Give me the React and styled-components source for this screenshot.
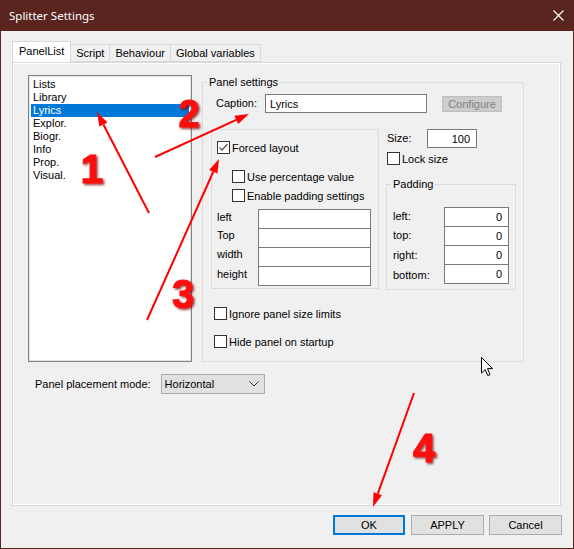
import React from "react";
import styled, { createGlobalStyle } from "styled-components";

const Global = createGlobalStyle`
  html, body { margin: 0; padding: 0; background: #fff; overflow: hidden; }
  * { box-sizing: border-box; }
`;

const Window = styled.div`
  position: relative;
  width: 574px;
  height: 549px;
  background: #f0f0f0;
  border: 1px solid #5b251f;
  border-top: none;
  display: flex;
  flex-direction: column;
  font-family: "Liberation Sans", Arial, sans-serif;
  font-size: 11px;
  color: #000;
`;

const TitleBar = styled.div`
  height: 31px;
  margin: 0 -1px;
  background: #5b251f;
  color: #fff;
  display: flex;
  align-items: center;
  justify-content: space-between;
  padding: 0 10px 1px 9px;
  font-family: "Noto Sans", "Open Sans", sans-serif;
  font-size: 11.5px;
`;

const CloseIcon = styled.svg`
  width: 11px;
  height: 11px;
`;

const Body = styled.div`
  flex: 1;
  display: flex;
  flex-direction: column;
  padding: 11px 11px 0 11px;
`;

const TabStrip = styled.div`
  display: flex;
  align-items: flex-end;
  height: 20px;
  position: relative;
  z-index: 1;
`;

const Tab = styled.div`
  height: ${(p) => (p.$active ? "21px" : "18px")};
  padding: ${(p) => (p.$active ? "2px 6px 0 6px" : "1px 5px 0 5px")};
  margin-left: ${(p) => (p.$first ? "0" : "-1px")};
  border: 1px solid #d9d9d9;
  border-bottom: ${(p) => (p.$active ? "none" : "1px solid #d9d9d9")};
  background: ${(p) => (p.$active ? "#fff" : "#f0f0f0")};
  display: flex;
  align-items: flex-start;
  font-size: 11px;
  line-height: 15px;
  color: #000;
  white-space: nowrap;
`;

const TabPanel = styled.div`
  width: 549px;
  height: 444px;
  border: 1px solid #d9d9d9;
  box-shadow: inset 1px 1px 0 #fff, inset -1px -1px 0 #fff;
  padding: 12px 0 0 15px;
  display: flex;
  flex-direction: column;
`;

const TopRow = styled.div`
  display: flex;
  align-items: flex-start;
`;

const ListBox = styled.div`
  width: 164px;
  height: 287px;
  background: #fff;
  border: 1px solid #828282;
  box-shadow: inset 0 0 0 1px #e3e3e3;
  padding: 2px 2px;
  display: flex;
  flex-direction: column;
`;

const ListItem = styled.div`
  height: 13px;
  line-height: 13px;
  padding-left: 2px;
  background: ${(p) => (p.$selected ? "#0078d7" : "transparent")};
  color: ${(p) => (p.$selected ? "#fff" : "#000")};
`;

const GroupBox = styled.fieldset`
  margin: ${(p) => p.$margin || "0"};
  padding: 0;
  min-width: 0;
  width: ${(p) => p.$width};
  height: ${(p) => p.$height};
  border: 1px solid #dcdcdc;
  display: flex;
  flex-direction: column;
`;

const Legend = styled.legend`
  padding: 0 2px;
  margin-left: 4px;
  line-height: 13px;
  font-size: 11px;
`;

const CaptionRow = styled.div`
  display: flex;
  align-items: center;
  margin-top: 5px;
  padding-left: 13px;
  height: 19px;
`;

const Label = styled.span`
  width: ${(p) => p.$width || "auto"};
  white-space: nowrap;
  line-height: 13px;
`;

const TextInput = styled.div`
  width: ${(p) => p.$width};
  height: ${(p) => p.$height || "19px"};
  background: #fff;
  border: 1px solid #7a7a7a;
  display: flex;
  align-items: center;
  justify-content: ${(p) => (p.$right ? "flex-end" : "flex-start")};
  padding: ${(p) => (p.$right ? "0 6px 0 0" : "0 0 0 4px")};
  margin-top: ${(p) => (p.$stacked ? "-1px" : "0")};
`;

const DisabledButton = styled.div`
  width: 60px;
  height: 16px;
  margin-left: 15px;
  background: #cccccc;
  border: 1px solid #bfbfbf;
  color: #838383;
  display: flex;
  align-items: center;
  justify-content: center;
`;

const MidRow = styled.div`
  display: flex;
  margin-top: 16px;
  padding-left: 8px;
`;

const InnerBox = styled.div`
  width: 168px;
  height: 160px;
  border: 1px solid #dcdcdc;
  padding: 11px 0 0 5px;
  display: flex;
  flex-direction: column;
`;

const CheckRow = styled.label`
  display: flex;
  align-items: center;
  gap: 2px;
  height: 13px;
  margin-top: ${(p) => p.$mt || "0"};
  margin-left: ${(p) => p.$ml || "0"};
  white-space: nowrap;
`;

const Box = styled.span`
  width: 13px;
  height: 13px;
  border: 1px solid #333;
  background: #fff;
  display: flex;
  align-items: center;
  justify-content: center;
  flex: none;
`;

const FieldGrid = styled.div`
  display: grid;
  grid-template-columns: 41px 113px;
  margin-top: 7px;
`;

const FieldLabel = styled.span`
  line-height: 13px;
  padding-top: ${(p) => p.$pt || "0"};
`;

const RightCol = styled.div`
  width: 130px;
  margin-left: 7px;
  display: flex;
  flex-direction: column;
`;

const SizeRow = styled.div`
  display: flex;
  align-items: center;
  height: 19px;
  padding-left: 1px;
`;

const PadGrid = styled.div`
  display: grid;
  grid-template-columns: 51px 65px;
  align-items: center;
  margin-top: 16px;
  padding-left: 6px;
`;

const PadLabel = styled.span`
  line-height: 13px;
  margin-top: ${(p) => p.$mt || "0"};
`;

const PlacementRow = styled.div`
  display: flex;
  align-items: center;
  margin-top: 12px;
  padding-left: 7px;
  gap: 10px;
`;

const Select = styled.div`
  width: 104px;
  height: 20px;
  background: #e1e1e1;
  border: 1px solid #adadad;
  display: flex;
  align-items: center;
  justify-content: space-between;
  padding: 0 5px 0 3px;
`;

const Footer = styled.div`
  display: flex;
  justify-content: flex-end;
  gap: 5px;
  margin-top: 9px;
`;

const Button = styled.div`
  width: ${(p) => (p.$default ? "72px" : "73px")};
  margin-right: ${(p) => (p.$default ? "1px" : "0")};
  height: 20px;
  background: #e1e1e1;
  border: ${(p) => (p.$default ? "2px solid #0078d7" : "1px solid #adadad")};
  display: flex;
  align-items: center;
  justify-content: center;
`;

const Overlay = styled.svg`
  position: absolute;
  left: -1px;
  top: 0;
  width: 574px;
  height: 549px;
  pointer-events: none;
`;

const Cursor = styled.svg`
  position: absolute;
  left: 480px;
  top: 357px;
  width: 13px;
  height: 20px;
`;

const Check = ({ checked }) => (
  <Box>
    {checked && (
      <svg width="11" height="11" viewBox="0 0 11 11">
        <polyline points="1.5,5.5 4,8 9.5,2" fill="none" stroke="#555" strokeWidth="1.3" />
      </svg>
    )}
  </Box>
);

const CheckBox = ({ label, checked, mt, ml }) => (
  <CheckRow $mt={mt} $ml={ml}>
    <Check checked={checked} />
    <span>{label}</span>
  </CheckRow>
);

const items = ["Lists", "Library", "Lyrics", "Explor.", "Biogr.", "Info", "Prop.", "Visual."];

const Arrow = ({ x1, y1, x2, y2 }) => {
  const a = Math.atan2(y2 - y1, x2 - x1);
  const len = 14;
  const w = 4.5;
  const bx = x2 - len * Math.cos(a);
  const by = y2 - len * Math.sin(a);
  const px = -Math.sin(a) * w;
  const py = Math.cos(a) * w;
  return (
    <g>
      <line x1={x1} y1={y1} x2={bx} y2={by} stroke="#ff0000" strokeWidth="2" />
      <polygon
        points={`${x2},${y2} ${bx + px},${by + py} ${bx - px},${by - py}`}
        fill="#ff0000"
      />
    </g>
  );
};

const Num = ({ x, y, children, size = 40 }) => (
  <text
    x={x}
    y={y}
    textAnchor="middle"
    fontFamily="Liberation Sans, Arial, sans-serif"
    fontWeight="bold"
    fontSize={size}
    fill="#ff1010"
    stroke="#ff1010"
    strokeWidth="1"
    strokeLinejoin="round"
    filter="url(#shade)"
  >
    {children}
  </text>
);

export default function App() {
  return (
    <>
      <Global />
      <Window>
        <TitleBar>
          <span>Splitter Settings</span>
          <CloseIcon viewBox="0 0 11 11">
            <path d="M0.5 0.5 L10.5 10.5 M10.5 0.5 L0.5 10.5" stroke="#fff" strokeWidth="1.1" />
          </CloseIcon>
        </TitleBar>
        <Body>
          <TabStrip>
            <Tab $active $first>PanelList</Tab>
            <Tab>Script</Tab>
            <Tab>Behaviour</Tab>
            <Tab>Global variables</Tab>
          </TabStrip>
          <TabPanel>
            <TopRow>
              <ListBox>
                {items.map((it) => (
                  <ListItem key={it} $selected={it === "Lyrics"}>
                    {it}
                  </ListItem>
                ))}
              </ListBox>
              <GroupBox $width="322px" $height="286px" $margin="1px 0 0 10px">
                <Legend>Panel settings</Legend>
                <CaptionRow>
                  <Label $width="49px">Caption:</Label>
                  <TextInput $width="162px">Lyrics</TextInput>
                  <DisabledButton>Configure</DisabledButton>
                </CaptionRow>
                <MidRow>
                  <InnerBox>
                    <CheckBox label="Forced layout" checked />
                    <CheckBox label="Use percentage value" mt="16px" ml="15px" />
                    <CheckBox label="Enable padding settings" mt="6px" ml="15px" />
                    <FieldGrid>
                      <FieldLabel $pt="2px">left</FieldLabel>
                      <TextInput $width="113px" $height="20px" />
                      <FieldLabel>Top</FieldLabel>
                      <TextInput $width="113px" $height="20px" $stacked />
                      <FieldLabel>width</FieldLabel>
                      <TextInput $width="113px" $height="20px" $stacked />
                      <FieldLabel $pt="1px">height</FieldLabel>
                      <TextInput $width="113px" $height="20px" $stacked />
                    </FieldGrid>
                  </InnerBox>
                  <RightCol>
                    <SizeRow>
                      <Label $width="40px">Size:</Label>
                      <TextInput $width="50px" $right>100</TextInput>
                    </SizeRow>
                    <CheckBox label="Lock size" mt="4px" ml="1px" />
                    <GroupBox $width="130px" $height="112px" $margin="13px 0 0 0">
                      <Legend>Padding</Legend>
                      <PadGrid>
                        <PadLabel $mt="-2px">left:</PadLabel>
                        <TextInput $width="65px" $height="20px" $right>0</TextInput>
                        <PadLabel $mt="-2px">top:</PadLabel>
                        <TextInput $width="65px" $height="20px" $right $stacked>0</TextInput>
                        <PadLabel>right:</PadLabel>
                        <TextInput $width="65px" $height="20px" $right $stacked>0</TextInput>
                        <PadLabel $mt="2px">bottom:</PadLabel>
                        <TextInput $width="65px" $height="20px" $right $stacked>0</TextInput>
                      </PadGrid>
                    </GroupBox>
                  </RightCol>
                </MidRow>
                <CheckBox label="Ignore panel size limits" mt="17px" ml="11px" />
                <CheckBox label="Hide panel on startup" mt="15px" ml="11px" />
              </GroupBox>
            </TopRow>
            <PlacementRow>
              <Label>Panel placement mode:</Label>
              <Select>
                <span>Horizontal</span>
                <svg width="10" height="6" viewBox="0 0 10 6">
                  <polyline points="0.5,0.5 5,5 9.5,0.5" fill="none" stroke="#333" strokeWidth="1" />
                </svg>
              </Select>
            </PlacementRow>
          </TabPanel>
          <Footer>
            <Button $default>OK</Button>
            <Button>APPLY</Button>
            <Button>Cancel</Button>
          </Footer>
        </Body>

        <Cursor viewBox="0 0 13 20">
          <path
            d="M0.5 0.5 L0.5 16 L4.2 12.5 L6.8 18.6 L9 17.6 L6.5 11.6 L11.5 11.6 Z"
            fill="#fff"
            stroke="#000"
            strokeWidth="1"
            strokeLinejoin="miter"
          />
        </Cursor>

        <Overlay viewBox="0 0 574 549">
          <defs>
            <filter id="shade" x="-30%" y="-30%" width="160%" height="160%">
              <feDropShadow dx="1.5" dy="1.5" stdDeviation="1.2" floodColor="#7a0000" floodOpacity="0.8" />
            </filter>
          </defs>
          <Arrow x1={149} y1={213} x2={97} y2={112} />
          <Arrow x1={155} y1={157} x2={249} y2={114} />
          <Arrow x1={147} y1={320} x2={219} y2={159} />
          <Arrow x1={414} y1={393} x2={373} y2={507} />
          <Num x={92} y={183} size={41}>1</Num>
          <Num x={189} y={127} size={38}>2</Num>
          <Num x={183} y={308} size={40}>3</Num>
          <Num x={424} y={462} size={40}>4</Num>
        </Overlay>
      </Window>
    </>
  );
}
